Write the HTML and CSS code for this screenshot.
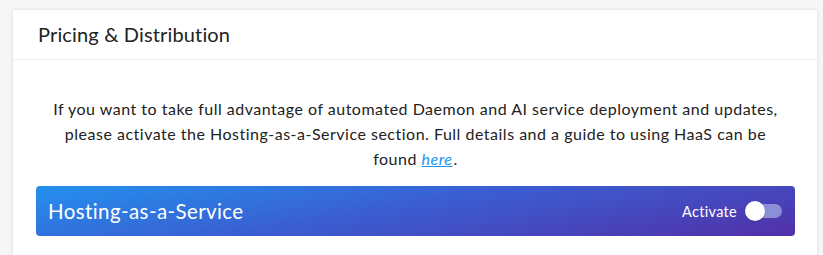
FILE: index.html
```html
<!DOCTYPE html>
<html>
<head>
<meta charset="utf-8">
<link rel="stylesheet" href="styles.css">
</head>
<body>
<div class="card">
  <div class="card-header">Pricing &amp; Distribution</div>
  <div class="card-body">
    <p class="intro">If you want to take full advantage of automated Daemon and AI service deployment and updates, please activate the Hosting-as-a-Service section. Full details and a guide to using HaaS can be found <a href="#">here</a>.</p>
    <div class="haas-bar">
      <span class="haas-title">Hosting-as-a-Service</span>
      <label class="activate">
        <span>Activate</span>
        <span class="switch"><span class="knob"></span></span>
      </label>
    </div>
  </div>
</div>
</body>
</html>
```
FILE: styles.css
```css
html, body { margin: 0; padding: 0; }
body {
  background: #f6f6f6;
  font-family: "Lato", "Noto Sans", sans-serif;
  color: #222;
  width: 823px;
  height: 255px;
  overflow: hidden;
}
.card {
  margin: 10px 6px 0 13px;
  background: #fff;
  box-shadow: 0 0 4px rgba(0,0,0,0.12);
  border-radius: 2px;
  height: 260px;
}
.card-header {
  height: 50px;
  box-sizing: border-box;
  padding: 12px 0 0 25px;
  font-size: 20px;
  line-height: 24px;
  letter-spacing: 0.15px;
  color: #222;
  border-bottom: 1px solid #eee;
}
.card-body {
  padding: 0 22px 0 23px;
}
.intro {
  margin: 0;
  padding: 36px 10px 0;
  text-align: center;
  font-size: 16px;
  line-height: 25px;
  color: #222;
  letter-spacing: 0.5px;
}
.intro a { color: #2196f3; font-style: italic; text-decoration: underline; margin-right: 1px; }
.haas-bar {
  margin-top: 15px;
  height: 50px;
  border-radius: 4px;
  background: linear-gradient(170deg, #2391ee 0%, #3a5fd3 45%, #5230a8 100%);
  display: flex;
  align-items: center;
  justify-content: space-between;
  padding: 0 13px 0 12px;
  color: #fff;
}
.haas-title { font-size: 20.5px; letter-spacing: 0.4px; }
.activate {
  display: flex;
  align-items: center;
  gap: 9px;
  font-size: 14.5px;
  letter-spacing: 0.3px;
}
.switch {
  position: relative;
  width: 36px;
  height: 14px;
  border-radius: 7px;
  background: #8a8fd8;
  display: block;
}
.knob {
  position: absolute;
  left: -1px;
  top: -3px;
  width: 20px;
  height: 20px;
  border-radius: 50%;
  background: #fff;
  box-shadow: 0 1px 2px rgba(0,0,0,0.2);
}
```
